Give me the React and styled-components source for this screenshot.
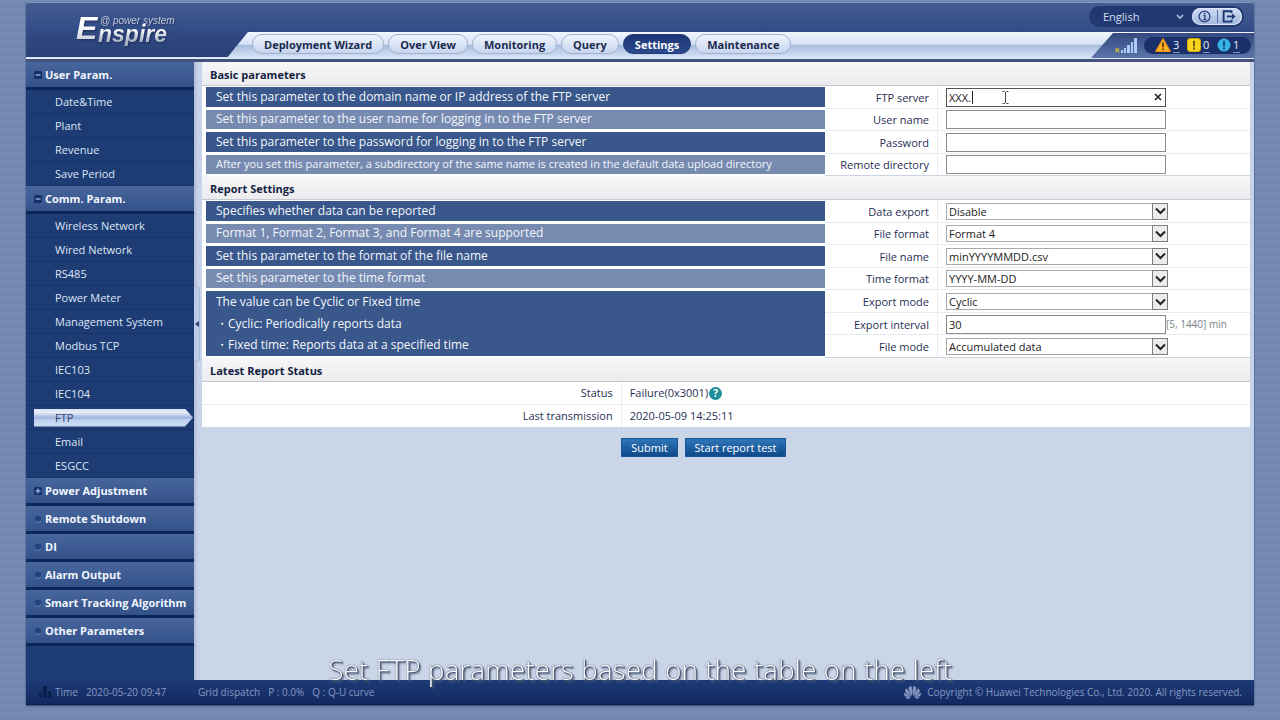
import React from "react";
import styled, { createGlobalStyle, css } from "styled-components";
import { SiHuawei } from "react-icons/si";

const GlobalStyle = createGlobalStyle`
  * {
    box-sizing: border-box;
  }
  body {
    margin: 0;
    background: repeating-linear-gradient(
      180deg,
      #778cb4 0px,
      #778cb4 3px,
      #7388b1 4px,
      #7388b1 7px,
      #788db5 8px
    );
    font-family: "Open Sans", "Noto Sans", sans-serif;
    font-size: 11px;
    color: #1f2f55;
  }
  button, input, select {
    font: inherit;
  }
`;

const tabs = [
  "Deployment Wizard",
  "Over View",
  "Monitoring",
  "Query",
  "Settings",
  "Maintenance",
];

const menu = [
  {
    title: "User Param.",
    icon: "minus",
    items: ["Date&Time", "Plant", "Revenue", "Save Period"],
  },
  {
    title: "Comm. Param.",
    icon: "minus",
    items: [
      "Wireless Network",
      "Wired Network",
      "RS485",
      "Power Meter",
      "Management System",
      "Modbus TCP",
      "IEC103",
      "IEC104",
      "FTP",
      "Email",
      "ESGCC",
    ],
  },
  { title: "Power Adjustment", icon: "plus" },
  { title: "Remote Shutdown", icon: "dot" },
  { title: "DI", icon: "dot" },
  { title: "Alarm Output", icon: "dot" },
  { title: "Smart Tracking Algorithm", icon: "dot" },
  { title: "Other Parameters", icon: "dot" },
];

const basicNotes = [
  { text: "Set this parameter to the domain name or IP address of the FTP server" },
  { text: "Set this parameter to the user name for logging in to the FTP server" },
  { text: "Set this parameter to the password for logging in to the FTP server" },
  {
    text: "After you set this parameter, a subdirectory of the same name is created in the default data upload directory",
    small: true,
  },
];

const reportNotes = [
  { text: "Specifies whether data can be reported" },
  { text: "Format 1, Format 2, Format 3, and Format 4 are supported" },
  { text: "Set this parameter to the format of the file name" },
  { text: "Set this parameter to the time format" },
  {
    text: "The value can be Cyclic or Fixed time",
    points: [
      "Cyclic: Periodically reports data",
      "Fixed time: Reports data at a specified time",
    ],
  },
];

const reportFields = [
  { id: "dataExport", label: "Data export", value: "Disable", select: true },
  { id: "fileFormat", label: "File format", value: "Format 4", select: true },
  { id: "fileName", label: "File name", value: "minYYYYMMDD.csv", select: true },
  { id: "timeFormat", label: "Time format", value: "YYYY-MM-DD", select: true },
  { id: "exportMode", label: "Export mode", value: "Cyclic", select: true },
  { id: "exportInterval", label: "Export interval", value: "30", hint: "[5, 1440] min" },
  { id: "fileMode", label: "File mode", value: "Accumulated data", select: true },
];

const SelectField = ({ id, value }) => (
  <SelectBox>
    <select id={id} defaultValue={value}>
      <option>{value}</option>
    </select>
    <span>
      <svg width="11" height="8" viewBox="0 0 11 8">
        <path d="M1 1.5 L5.5 6 L10 1.5" fill="none" stroke="#222" strokeWidth="2" />
      </svg>
    </span>
  </SelectBox>
);

const Notes = ({ notes }) => (
  <NoteColumn>
    {notes.map((note, i) => (
      <Note key={note.text} $alt={i % 2 === 1} $small={note.small} $span={note.points ? 3 : 1}>
        <p>{note.text}</p>
        {note.points && note.points.map((point) => <p key={point}>・{point}</p>)}
      </Note>
    ))}
  </NoteColumn>
);

const Header = () => (
  <HeaderBar>
    <Logo>
      <LogoInitial>E</LogoInitial>
      <div>
        <LogoTag>@ power system</LogoTag>
        <LogoName>nspire</LogoName>
      </div>
    </Logo>
    <HeaderMain>
      <TopRow>
        <LanguagePill>
          <select aria-label="Language" defaultValue="English">
            <option>English</option>
          </select>
          <svg width="8" height="6" viewBox="0 0 8 6">
            <path d="M1 1 L4 4.2 L7 1" fill="none" stroke="#b9c8e6" strokeWidth="1.6" />
          </svg>
          <ToolPill>
            <button aria-label="About">
              <svg width="13" height="13" viewBox="0 0 13 13">
                <circle cx="6.5" cy="6.5" r="5.4" fill="none" stroke="#2b467f" strokeWidth="1.3" />
                <path d="M5.4 5.6 H7 V9.4 M5.2 9.6 H8.4" fill="none" stroke="#2b467f" strokeWidth="1.3" />
                <circle cx="6.6" cy="3.5" r="0.9" fill="#2b467f" />
              </svg>
            </button>
            <button aria-label="Log out">
              <svg width="15" height="13" viewBox="0 0 15 13">
                <path d="M9.5 3 V1.2 H1.6 V11.6 H9.5 V9.8" fill="none" stroke="#1d3973" strokeWidth="1.9" />
                <path d="M5 6.4 H11" stroke="#1d3973" strokeWidth="1.8" />
                <path d="M10 3.4 L13.6 6.4 L10 9.4 Z" fill="#1d3973" />
              </svg>
            </button>
          </ToolPill>
        </LanguagePill>
      </TopRow>
      <TabRow>
        <Tabs>
          {tabs.map((tab) => (
            <Tab key={tab} $active={tab === "Settings"}>
              {tab}
            </Tab>
          ))}
        </Tabs>
        <StatusArea>
          <svg width="22" height="15" viewBox="0 0 22 15">
            <path d="M0.5 10.5 L4 14 M4 10.5 L0.5 14" stroke="#d8b93c" strokeWidth="1.2" />
            <g fill="#a9cdf5">
              <rect x="6" y="12" width="2" height="3" />
              <rect x="9" y="10" width="2" height="5" />
              <rect x="12" y="7" width="3" height="8" />
              <rect x="16" y="4" width="2" height="11" />
              <rect x="19" y="0" width="3" height="15" />
            </g>
          </svg>
          <AlarmPill>
            <svg width="16" height="14" viewBox="0 0 16 14">
              <path d="M8 0.5 L15.5 13.5 H0.5 Z" fill="#fbb024" stroke="#ee8d12" />
              <path d="M8 4.5 V9.2 M8 10.4 V12" stroke="#4d2a08" strokeWidth="1.6" />
            </svg>
            <a href="#major">3</a>
            <svg width="14" height="14" viewBox="0 0 14 14">
              <rect x="0.5" y="0.5" width="13" height="13" rx="2.5" fill="#f8d41c" stroke="#d2a90e" />
              <path d="M7 2.8 V8.4 M7 9.6 V11.4" stroke="#4d3d08" strokeWidth="1.6" />
            </svg>
            <a href="#minor">0</a>
            <svg width="14" height="14" viewBox="0 0 14 14">
              <circle cx="7" cy="7" r="6.5" fill="#35b4e6" />
              <path d="M7 2.8 V8.4 M7 9.6 V11.4" stroke="#0c3a66" strokeWidth="1.6" />
            </svg>
            <a href="#warning">1</a>
          </AlarmPill>
        </StatusArea>
      </TabRow>
    </HeaderMain>
  </HeaderBar>
);

const MenuIcon = ({ type }) => {
  if (type === "dot") {
    return (
      <svg width="8" height="8" viewBox="0 0 8 8">
        <circle cx="4" cy="4.6" r="3.2" fill="#5f80b4" />
        <circle cx="4" cy="3.6" r="3.2" fill="#24427a" />
      </svg>
    );
  }
  return (
    <svg width="8" height="8" viewBox="0 0 8 8">
      <rect width="8" height="8" rx="1.5" fill="#16316a" />
      <path d="M1.5 4 H6.5" stroke="#a9bfe4" strokeWidth="1.2" />
      {type === "plus" && <path d="M4 1.5 V6.5" stroke="#a9bfe4" strokeWidth="1.2" />}
    </svg>
  );
};

const Sidebar = () => (
  <SideNav>
    {menu.map((group) => (
      <div key={group.title}>
        <MenuTitle>
          <MenuIcon type={group.icon} />
          {group.title}
        </MenuTitle>
        {group.items &&
          group.items.map((item) => (
            <MenuItem key={item} href={`#${item}`} $active={item === "FTP"}>
              <span>{item}</span>
            </MenuItem>
          ))}
      </div>
    ))}
  </SideNav>
);

const App = () => {
  return (
    <>
      <GlobalStyle />
      <Shell>
        <Header />
        <Body>
          <Sidebar />
          <Splitter>
            <button aria-label="Collapse menu">
              <svg width="4" height="6" viewBox="0 0 4 6">
                <path d="M4 0 V6 L0 3 Z" fill="#2c4372" />
              </svg>
            </button>
          </Splitter>
          <Content>
            <SectionTitle>Basic parameters</SectionTitle>
            <SectionBody $rows={4}>
              <Notes notes={basicNotes} />
              <FieldColumn>
                <Field>
                  <label htmlFor="ftpServer">FTP server</label>
                  <div>
                    <InputBox>
                      <TextInput id="ftpServer" defaultValue="XXX." $focused />
                      <Caret />
                      <Pointer width="7" height="13" viewBox="0 0 7 13">
                        <path
                          d="M0.5 0.5 H2.5 L3.5 1.5 L4.5 0.5 H6.5 M3.5 1 V12 M0.5 12.5 H2.5 L3.5 11.5 L4.5 12.5 H6.5"
                          fill="none"
                          stroke="#444"
                        />
                      </Pointer>
                      <ClearButton aria-label="Clear">
                        <svg width="8" height="8" viewBox="0 0 8 8">
                          <path d="M1 1 L7 7 M7 1 L1 7" stroke="#222" strokeWidth="1.6" />
                        </svg>
                      </ClearButton>
                    </InputBox>
                  </div>
                </Field>
                <Field>
                  <label htmlFor="userName">User name</label>
                  <div>
                    <TextInput id="userName" />
                  </div>
                </Field>
                <Field>
                  <label htmlFor="password">Password</label>
                  <div>
                    <TextInput id="password" type="password" />
                  </div>
                </Field>
                <Field>
                  <label htmlFor="remoteDir">Remote directory</label>
                  <div>
                    <TextInput id="remoteDir" />
                  </div>
                </Field>
              </FieldColumn>
            </SectionBody>

            <SectionTitle>Report Settings</SectionTitle>
            <SectionBody $rows={7}>
              <Notes notes={reportNotes} />
              <FieldColumn>
                {reportFields.map((field) => (
                  <Field key={field.id}>
                    <label htmlFor={field.id}>{field.label}</label>
                    <div>
                      {field.select ? (
                        <SelectField id={field.id} value={field.value} />
                      ) : (
                        <TextInput id={field.id} defaultValue={field.value} />
                      )}
                      {field.hint && <Hint>{field.hint}</Hint>}
                    </div>
                  </Field>
                ))}
              </FieldColumn>
            </SectionBody>

            <SectionTitle>Latest Report Status</SectionTitle>
            <StatusTable>
              <tbody>
                <tr>
                  <th scope="row">Status</th>
                  <td>
                    <StatusValue>
                      Failure(0x3001)
                      <HelpButton aria-label="Help">?</HelpButton>
                    </StatusValue>
                  </td>
                </tr>
                <tr>
                  <th scope="row">Last transmission</th>
                  <td>2020-05-09 14:25:11</td>
                </tr>
              </tbody>
            </StatusTable>
            <Actions>
              <ActionButton>Submit</ActionButton>
              <ActionButton>Start report test</ActionButton>
            </Actions>
          </Content>
        </Body>
        <Footer>
          <svg width="12" height="12" viewBox="0 0 12 12" fill="#0b1f4d">
            <rect x="0" y="7" width="3" height="5" />
            <rect x="4" y="0" width="4" height="12" />
            <rect x="9" y="5" width="3" height="7" />
          </svg>
          <FooterTime>
            <span>Time</span>
            <span>2020-05-20 09:47</span>
          </FooterTime>
          <span>Grid dispatch</span>
          <span>P : 0.0%</span>
          <span>Q : Q-U curve</span>
          <Copyright>
            <SiHuawei size={17} />
            Copyright © Huawei Technologies Co., Ltd. 2020. All rights reserved.
          </Copyright>
        </Footer>
      </Shell>
      <Caption>Set FTP parameters based on the table on the left</Caption>
    </>
  );
};

const Shell = styled.div`
  display: flex;
  flex-direction: column;
  min-height: calc(100vh - 17px);
  margin: 2px 26px 15px;
  border-radius: 3px 3px 0 0;
  box-shadow: 0 1px 2px #2a3f6e;
  background: #1d3c74;
`;

const HeaderBar = styled.header`
  display: flex;
  height: 60px;
  border-top: 1px solid #8397bf;
  border-bottom: 3px solid #43537c;
  border-radius: 3px 3px 0 0;
  background: linear-gradient(#465b90, #35508a 40%, #304780 60%, #2a3f76);
  box-shadow: inset 0 -2px 0 #dfe7f5;
`;

const Logo = styled.div`
  display: flex;
  width: 200px;
  padding: 8px 0 0 50px;
  font-family: "Liberation Sans", Arial, sans-serif;
  font-style: italic;
  color: #c3cbdb;
  filter: drop-shadow(1px 1px 1px #1b2c59);
`;

const logoFill = css`
  background: linear-gradient(#ffffff 30%, #a9b3c6 80%);
  background-clip: text;
  color: transparent;
`;

const LogoInitial = styled.span`
  width: 20px;
  font-size: 32px;
  font-weight: bold;
  line-height: 34px;
  padding-right: 4px;
  margin-right: -2px;
  box-sizing: content-box;
  ${logoFill}
`;

const LogoTag = styled.div`
  font-size: 10px;
  line-height: 12px;
  padding: 4px 0 0 2px;
`;

const LogoName = styled.div`
  font-size: 23px;
  line-height: 24px;
  margin-top: -5px;
  font-weight: bold;
  ${logoFill}
`;

const HeaderMain = styled.div`
  flex: 1;
  display: flex;
  flex-direction: column;
`;

const TopRow = styled.div`
  display: flex;
  justify-content: flex-end;
  height: 29px;
  padding: 3px 10px 0 0;
`;

const LanguagePill = styled.div`
  display: flex;
  align-items: center;
  height: 21px;
  padding: 0 2px 0 14px;
  border-radius: 11px;
  background: #223870;
  select {
    appearance: none;
    width: 73px;
    padding: 0;
    border: 0;
    background: none;
    color: #d5dff2;
  }
`;

const ToolPill = styled.div`
  display: flex;
  align-items: center;
  margin-left: 8px;
  width: 50px;
  height: 17px;
  border-radius: 9px;
  background: linear-gradient(#cddaf2, #a3b8de);
  box-shadow: inset 0 0 0 1px #dbe6f8;
  button {
    flex: 1;
    display: flex;
    justify-content: center;
    padding: 0;
    border: 0;
    background: none;
  }
  button + button {
    border-left: 1px solid #5872a6;
  }
`;

const TabRow = styled.div`
  flex: 1;
  display: flex;
  clip-path: polygon(22px 0, 100% 0, 100% 100%, 0 100%);
  background: linear-gradient(#f3f7fd 0, #d5e1f4 45%, #a9bddf 50%, #d3e0f4 92%, #dfe7f5);
`;

const Tabs = styled.nav`
  flex: 1;
  display: flex;
  gap: 4px;
  padding: 2px 0 0 26px;
`;

const Tab = styled.button`
  height: 20px;
  padding: 0 11px;
  border: 1px solid #a3b2cf;
  border-radius: 10px;
  background: linear-gradient(#f0f5fd, #c6d5ef);
  color: #1c2a4d;
  font-weight: bold;
  line-height: 17px;
  ${(props) =>
    props.$active &&
    css`
      border-color: #1f3977;
      background: linear-gradient(#1d3471, #2b4a8f);
      color: #ffffff;
    `}
`;

const StatusArea = styled.div`
  display: flex;
  align-items: center;
  gap: 7px;
  margin-top: 1px;
  padding: 0 3px 2px 24px;
  background: linear-gradient(#33497f, #5c76aa);
  clip-path: polygon(22px 0, 100% 0, 100% calc(100% - 1px), 0 calc(100% - 1px));
`;

const AlarmPill = styled.div`
  display: flex;
  align-items: center;
  height: 17px;
  padding: 0 4px 0 11px;
  border-radius: 9px;
  background: #1b2f68;
  a {
    width: 7px;
    margin: 0 7px 0 2px;
    color: #e4ecfa;
    line-height: 14px;
    text-decoration: none;
    border-bottom: 1px solid #8193bd;
  }
`;

const Body = styled.div`
  flex: 1;
  display: flex;
`;

const SideNav = styled.nav`
  width: 168px;
  background: #1d3c74;
`;

const MenuTitle = styled.div`
  display: flex;
  align-items: center;
  gap: 3px;
  height: 28px;
  padding-left: 8px;
  border-bottom: 3px solid #0c2559;
  background: linear-gradient(#47669c, #34528a);
  color: #f2f6fd;
  font-weight: bold;
`;

const MenuItem = styled.a`
  display: flex;
  align-items: center;
  height: 24px;
  padding-left: 8px;
  border-bottom: 1px solid #17336a;
  color: #dde6f6;
  text-decoration: none;
  span {
    flex: 1;
    padding-left: 21px;
    line-height: 18px;
  }
  ${(props) =>
    props.$active &&
    css`
      color: #33456f;
      span {
        margin-right: 1px;
        background: linear-gradient(#d9e3f5 0, #e6edf9 20%, #9cb2dc 50%, #bfd1f0 60%, #cfdef7);
        clip-path: polygon(0 0, calc(100% - 8px) 0, 100% 50%, calc(100% - 8px) 100%, 0 100%);
      }
    `}
`;

const Splitter = styled.div`
  display: flex;
  align-items: center;
  width: 8px;
  background: linear-gradient(90deg, #aebcdb, #c9d4ea 50%);
  padding-bottom: 94px;
  button {
    display: flex;
    align-items: center;
    width: 6px;
    height: 76px;
    padding: 0 0 0 1px;
    border: 1px solid #a9b9da;
    border-left: 0;
    border-radius: 0 4px 4px 0;
    background: #bccbe6;
  }
`;

const Content = styled.main`
  flex: 1;
  border-right: 4px solid #c3d3ea;
  background: #cbd5e8;
`;

const SectionTitle = styled.h2`
  height: 24px;
  margin: 0;
  padding-left: 8px;
  border-bottom: 1px solid #c6c9cf;
  background: linear-gradient(#f7f7f9, #ebebed);
  color: #141f42;
  font-size: 11px;
  font-weight: bold;
  line-height: 26px;
`;

const SectionBody = styled.div`
  display: grid;
  grid-template-columns: minmax(0, 1fr) 425px;
  height: ${(props) => (props.$rows === 4 ? 90 : 158)}px;
  padding-left: 4px;
  background: #ffffff;
`;

const NoteColumn = styled.div`
  display: grid;
  grid-auto-rows: 1fr;
  row-gap: 3px;
  padding: 1px 0 2px;
`;

const Note = styled.div`
  grid-row: span ${(props) => props.$span};
  display: grid;
  grid-auto-rows: 1fr;
  align-items: center;
  padding-left: 10px;
  background: ${(props) => (props.$alt ? "#778bb1" : "#39578a")};
  color: #f2f6fc;
  font-size: ${(props) => (props.$small ? 11 : 12)}px;
  line-height: 18px;
  white-space: nowrap;
  p {
    margin: 0;
  }
`;

const FieldColumn = styled.div`
  display: grid;
  grid-auto-rows: 1fr;
`;

const Field = styled.div`
  display: grid;
  grid-template-columns: 113px 1fr;
  border-bottom: 1px solid #e6ecf2;
  line-height: 18px;
  label {
    display: flex;
    align-items: center;
    justify-content: flex-end;
    padding: 2px 8px 0 0;
    border-right: 1px solid #e6ecf2;
  }
  > div {
    display: flex;
    align-items: center;
    padding: 1px 0 0 8px;
  }
  &:last-child {
    border-bottom-color: #c9d6e2;
  }
`;

const InputBox = styled.div`
  position: relative;
  display: flex;
`;

const TextInput = styled.input`
  width: 220px;
  height: 19px;
  padding: 0 2px;
  border: 1px solid ${(props) => (props.$focused ? "#555" : "#8c8c8c")};
  outline: 0;
  background: #ffffff;
  color: #222222;
`;

const Caret = styled.span`
  position: absolute;
  left: 26px;
  top: 3px;
  width: 1px;
  height: 13px;
  background: #222222;
`;

const Pointer = styled.svg`
  position: absolute;
  left: 56px;
  top: 3px;
`;

const ClearButton = styled.button`
  position: absolute;
  right: 4px;
  top: 5px;
  display: flex;
  padding: 0;
  border: 0;
  background: none;
`;

const SelectBox = styled.div`
  position: relative;
  display: flex;
  select {
    appearance: none;
    width: 222px;
    height: 17px;
    padding: 0 2px;
    border: 1px solid #a9a9a9;
    border-radius: 0;
    background: #ffffff;
    color: #222222;
    line-height: 15px;
  }
  span {
    position: absolute;
    right: 0;
    top: 0;
    display: flex;
    align-items: center;
    justify-content: center;
    width: 16px;
    height: 17px;
    border: 1px solid #7d7d7d;
    background: #ececec;
    pointer-events: none;
  }
`;

const Hint = styled.span`
  color: #7b7f88;
  font-size: 10px;
`;

const StatusTable = styled.table`
  width: 100%;
  border-collapse: collapse;
  background: #ffffff;
  th,
  td {
    padding: 2px 8px;
    border-bottom: 1px solid #e6ecf2;
    line-height: 18px;
  }
  tr:last-child > * {
    border-bottom: 0;
  }
  th {
    width: 40%;
    border-right: 1px solid #e6ecf2;
    text-align: right;
    font-weight: normal;
  }
`;

const StatusValue = styled.span`
  display: flex;
  align-items: center;
  gap: 1px;
`;

const HelpButton = styled.button`
  width: 13px;
  height: 13px;
  padding: 0;
  border: 0;
  border-radius: 50%;
  background: #1d8f99;
  color: #ffffff;
  font-size: 10px;
  font-weight: bold;
  line-height: 13px;
`;

const Actions = styled.div`
  display: flex;
  gap: 7px;
  padding: 11px 0 0 40%;
`;

const ActionButton = styled.button`
  height: 19px;
  padding: 0 9px;
  border: 1px solid #1a5796;
  background: linear-gradient(#2f76b8, #0f4a8c);
  color: #ffffff;
  line-height: 16px;
`;

const Footer = styled.footer`
  display: flex;
  align-items: center;
  gap: 8px;
  height: 25px;
  padding: 0 12px 0 13px;
  border-bottom: 1px solid #0d1f4b;
  background: linear-gradient(#1d3b77, #13295f);
  color: #8598c2;
  font-size: 10px;
  svg {
    margin-right: -4px;
  }
`;

const FooterTime = styled.div`
  display: flex;
  gap: 8px;
  width: 135px;
`;

const Copyright = styled.div`
  display: flex;
  align-items: center;
  gap: 10px;
  margin-left: auto;
`;

const Caption = styled.div`
  position: fixed;
  left: 0;
  right: 0;
  bottom: 31px;
  text-align: center;
  color: #ffffff;
  font-size: 28px;
  font-weight: 300;
  line-height: 40px;
  text-shadow: 0 0 1px #3a4a66, 0 0 1px #3a4a66, 1px 1px 1px #3a4a66, 2px 2px 2px #56647e;
  pointer-events: none;
`;

export default App;
